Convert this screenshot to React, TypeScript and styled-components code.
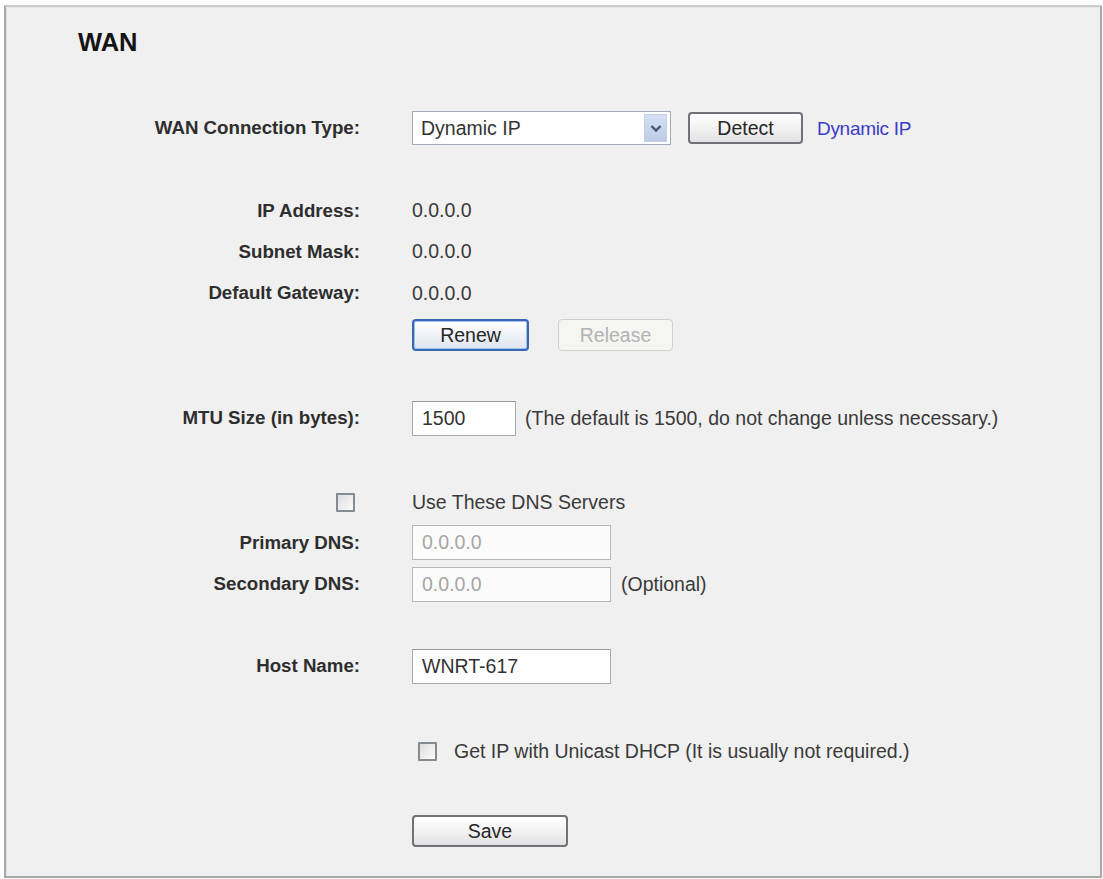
import React from 'react';
import styled, { createGlobalStyle, css } from 'styled-components';

const GlobalStyle = createGlobalStyle`
  html, body {
    margin: 0;
    padding: 0;
    background: #ffffff;
  }
  body {
    font-family: "Liberation Sans", Arial, sans-serif;
    color: #333;
  }
`;

const Panel = styled.div`
  margin: 5px 1px 1px 4px;
  height: 873px;
  box-sizing: border-box;
  padding-top: 20px;
  background: #f0f0f0;
  border: 2px solid #a9a9a9;
  border-top-color: #cbcbcb;
  box-shadow: inset 1px 1px 0 #e4e4e4;
`;

const Title = styled.h1`
  margin: 0 0 0 72px;
  font-size: 25.5px;
  line-height: 30px;
  font-weight: bold;
  color: #141414;
`;

const Form = styled.div`
  display: flex;
  flex-direction: column;
`;

const Row = styled.div<{ $h: number; $top?: number }>`
  display: grid;
  grid-template-columns: 354px 1fr;
  column-gap: 52px;
  align-items: center;
  height: ${(p) => p.$h}px;
  margin-top: ${(p) => p.$top ?? 0}px;
`;

const Label = styled.div`
  text-align: right;
  font-size: 18.7px;
  font-weight: bold;
  color: #2e2e2e;
  display: flex;
  justify-content: flex-end;
  align-items: center;
`;

const Field = styled.div<{ $gap?: number }>`
  display: flex;
  align-items: center;
  gap: ${(p) => p.$gap ?? 0}px;
  font-size: 19.5px;
  color: #3a3a3a;
`;

const Text = styled.span<{ $muted?: boolean }>`
  font-size: 19.5px;
  color: ${(p) => (p.$muted ? '#a0a0a0' : '#3a3a3a')};
  white-space: nowrap;
`;

const Hint = styled.span<{ $ml?: number }>`
  margin-left: ${(p) => p.$ml ?? 0}px;
  font-size: 19.5px;
  color: #3a3a3a;
  white-space: nowrap;
`;

const TypeLink = styled.span`
  font-size: 19px;
  color: #3b3bc9;
  letter-spacing: -0.3px;
`;

const SelectBox = styled.div`
  position: relative;
  width: 259px;
  height: 34px;
  box-sizing: border-box;
  border: 1px solid #a3abb6;
  background: #ffffff;
  display: flex;
  align-items: center;
  padding-left: 8px;
  font-size: 19.5px;
  color: #333;
`;

const ArrowBox = styled.span`
  position: absolute;
  top: 2px;
  right: 3px;
  bottom: 2px;
  width: 23px;
  background: linear-gradient(#d6e0f2, #bccbe6);
  border: 1px solid #c3cfe6;
  box-sizing: border-box;
  display: flex;
  align-items: center;
  justify-content: center;
`;

const TextBox = styled.input<{ $w: number }>`
  width: ${(p) => p.$w}px;
  height: 35px;
  box-sizing: border-box;
  margin: 0;
  padding: 0 0 0 9px;
  border: 1px solid #a9a9a9;
  border-top-color: #9a9a9a;
  background: #ffffff;
  font-family: "Liberation Sans", Arial, sans-serif;
  font-size: 19.5px;
  color: #333;
  outline: none;

  &:disabled {
    color: #a6a6a6;
    background: #fbfbfb;
    border-color: #b8b8b8;
  }
`;

const variants = {
  normal: css`
    border: 2px solid #6f7276;
    background: linear-gradient(#ffffff 0%, #f2f2f2 50%, #e2e2e2 100%);
    color: #262626;
  `,
  focus: css`
    border: 2px solid #3a66b4;
    box-shadow: inset 0 0 0 1px #9dc2ec;
    background: linear-gradient(#ffffff 0%, #eef2f8 50%, #dfe6f0 100%);
    color: #262626;
  `,
  disabled: css`
    border: 1px solid #d0d0cc;
    background: #f5f5f2;
    color: #b2b2b2;
  `,
};

const Button = styled.button<{ $w: number; $kind?: keyof typeof variants }>`
  width: ${(p) => p.$w}px;
  height: 32px;
  box-sizing: border-box;
  margin: 0;
  padding: 0;
  border-radius: 4px;
  font-family: "Liberation Sans", Arial, sans-serif;
  font-size: 19.5px;
  cursor: default;
  ${(p) => variants[p.$kind ?? 'normal']}
`;

const Check = styled.input.attrs({ type: 'checkbox' })<{ $mr?: number }>`
  appearance: none;
  -webkit-appearance: none;
  width: 19px;
  height: 19px;
  margin: 0 ${(p) => p.$mr ?? 0}px 0 0;
  box-sizing: border-box;
  border: 2px solid #858b93;
  border-radius: 1px;
  background: linear-gradient(135deg, #dedede, #fbfbfb);
`;

const Chevron = () => (
  <svg width="12" height="9" viewBox="0 0 12 9">
    <path d="M1.5 2 L6 6.5 L10.5 2" fill="none" stroke="#445677" strokeWidth="2.4" />
  </svg>
);

export default function App() {
  return (
    <>
      <GlobalStyle />
      <Panel>
        <Title>WAN</Title>
        <Form>
          <Row $h={42} $top={50}>
            <Label>WAN Connection Type:</Label>
            <Field>
              <SelectBox>
                Dynamic IP
                <ArrowBox>
                  <Chevron />
                </ArrowBox>
              </SelectBox>
              <Button $w={115} style={{ marginLeft: 17 }}>Detect</Button>
              <Hint $ml={14}>
                <TypeLink>Dynamic IP</TypeLink>
              </Hint>
            </Field>
          </Row>

          <Row $h={41} $top={41}>
            <Label>IP Address:</Label>
            <Field><Text>0.0.0.0</Text></Field>
          </Row>
          <Row $h={41}>
            <Label>Subnet Mask:</Label>
            <Field><Text>0.0.0.0</Text></Field>
          </Row>
          <Row $h={42}>
            <Label>Default Gateway:</Label>
            <Field><Text>0.0.0.0</Text></Field>
          </Row>
          <Row $h={42}>
            <Label />
            <Field $gap={29}>
              <Button $w={117} $kind="focus">Renew</Button>
              <Button $w={115} $kind="disabled" disabled>Release</Button>
            </Field>
          </Row>

          <Row $h={42} $top={41}>
            <Label>MTU Size (in bytes):</Label>
            <Field>
              <TextBox $w={104} defaultValue="1500" />
              <Hint $ml={9}>(The default is 1500, do not change unless necessary.)</Hint>
            </Field>
          </Row>

          <Row $h={40} $top={43}>
            <Label>
              <Check $mr={5} />
            </Label>
            <Field><Text>Use These DNS Servers</Text></Field>
          </Row>
          <Row $h={41}>
            <Label>Primary DNS:</Label>
            <Field>
              <TextBox $w={199} defaultValue="0.0.0.0" disabled />
            </Field>
          </Row>
          <Row $h={42}>
            <Label>Secondary DNS:</Label>
            <Field>
              <TextBox $w={199} defaultValue="0.0.0.0" disabled />
              <Hint $ml={10}>(Optional)</Hint>
            </Field>
          </Row>

          <Row $h={42} $top={40}>
            <Label>Host Name:</Label>
            <Field>
              <TextBox $w={199} defaultValue="WNRT-617" />
            </Field>
          </Row>

          <Row $h={42} $top={43}>
            <Label />
            <Field>
              <Check style={{ marginLeft: 6 }} $mr={17} />
              <Text>Get IP with Unicast DHCP (It is usually not required.)</Text>
            </Field>
          </Row>

          <Row $h={42} $top={38}>
            <Label />
            <Field>
              <Button $w={156}>Save</Button>
            </Field>
          </Row>
        </Form>
      </Panel>
    </>
  );
}
